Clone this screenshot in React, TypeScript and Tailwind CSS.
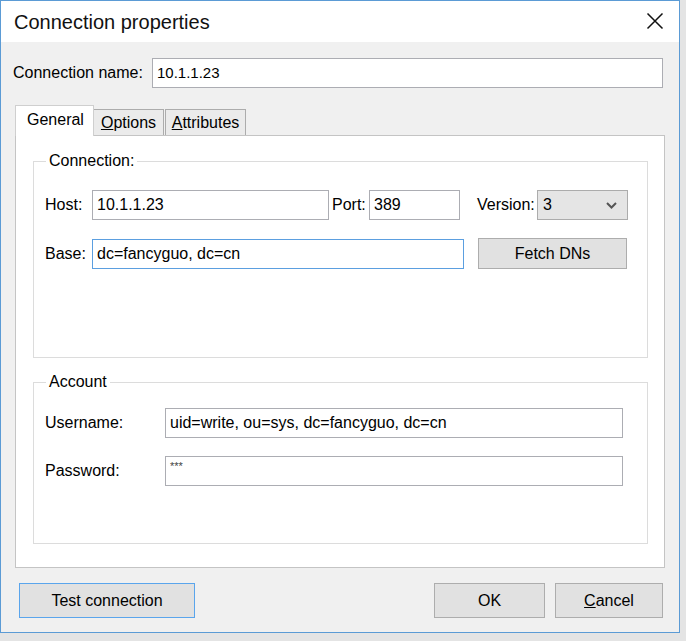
import React from 'react';

const FONT = "font-['Liberation_Sans',Arial,sans-serif]";

function TextBox({
  value,
  className = '',
  focused = false,
  tiny = false,
}: {
  value: string;
  className?: string;
  focused?: boolean;
  tiny?: boolean;
}) {
  return (
    <div
      className={`h-[30px] bg-white border flex pl-[4px] ${
        focused ? 'border-[#5b9fe0]' : 'border-[#acadb3]'
      } ${tiny ? 'items-start pt-[1px] text-[11px] text-[#444]' : 'items-center text-[16px]'} ${className}`}
    >
      {value}
    </div>
  );
}

function Button({
  children,
  className = '',
  focused = false,
}: {
  children: React.ReactNode;
  className?: string;
  focused?: boolean;
}) {
  return (
    <button
      className={`h-[35px] bg-[#e1e1e1] border text-[16px] flex items-center justify-center ${
        focused ? 'border-[#5aa5ec]' : 'border-[#adadad]'
      } ${className}`}
    >
      {children}
    </button>
  );
}

function GroupBox({
  title,
  className = '',
  children,
}: {
  title: string;
  className?: string;
  children: React.ReactNode;
}) {
  return (
    <div className={`relative border border-[#dcdcdc] ${className}`}>
      <span className="absolute -top-[11px] left-[12px] bg-white px-[3px] text-[16px] leading-[20px]">
        {title}
      </span>
      {children}
    </div>
  );
}

export default function App() {
  return (
    <div className={`w-[686px] h-[641px] bg-[#e4e4e4] text-black ${FONT}`}>
      <div className="w-[680px] h-[633px] border border-[#5b9bd5] bg-[#f0f0f0] flex flex-col">
        {/* Title bar */}
        <div className="h-[41px] bg-white flex items-center justify-between pl-[13px] pr-[15px]">
          <span className="text-[20px] text-[#111]">Connection properties</span>
          <svg width="18" height="18" viewBox="0 0 18 18" className="mb-[2px]">
            <path d="M1.5 1.5 L16.5 16.5 M16.5 1.5 L1.5 16.5" stroke="#111" strokeWidth="1.5" />
          </svg>
        </div>

        {/* Connection name */}
        <div className="mt-[16px] flex items-center pl-[12px] pr-[16px]">
          <span className="w-[139px] text-[16px]">Connection name:</span>
          <TextBox value="10.1.1.23" className="flex-1 !text-[15px]" />
        </div>

        {/* Tabs */}
        <div className="mt-[17px] ml-[14px] h-[30px] flex items-end text-[16px]">
          <div className="relative z-10 w-[79px] h-[31px] -mb-px bg-white border border-b-0 border-[#cfcfcf] flex items-center pl-[11px] pb-[2px]">
            General
          </div>
          <div className="w-[70px] h-[26px] bg-[#ebebeb] border border-l-0 border-b-0 border-[#acacac] flex items-center justify-center">
            <span>
              <span className="underline">O</span>ptions
            </span>
          </div>
          <div className="w-[81px] h-[26px] ml-[1px] bg-[#ebebeb] border border-b-0 border-[#acacac] flex items-center justify-center">
            <span>
              <span className="underline">A</span>ttributes
            </span>
          </div>
        </div>

        {/* Tab page */}
        <div className="ml-[14px] w-[650px] h-[433px] border border-[#c4c4c4] bg-white flex flex-col">
          <GroupBox title="Connection:" className="mt-[25px] ml-[17px] w-[615px] h-[197px] pt-[28px] pl-[11px]">
            <div className="flex items-center h-[30px] text-[16px]">
              <span className="w-[47px]">Host:</span>
              <TextBox value="10.1.1.23" className="w-[237px]" />
              <span className="ml-[3px] w-[37px]">Port:</span>
              <TextBox value="389" className="w-[91px]" />
              <span className="ml-[17px] w-[60px]">Version:</span>
              <div className="w-[91px] h-[30px] bg-[#e5e5e5] border border-[#acacac] flex items-center justify-between pl-[5px] pr-[10px]">
                <span>3</span>
                <svg width="11" height="7" viewBox="0 0 11 7">
                  <path d="M1 1 L5.5 5.5 L10 1" fill="none" stroke="#555" strokeWidth="2" />
                </svg>
              </div>
            </div>
            <div className="flex items-center h-[31px] mt-[18px] text-[16px]">
              <span className="w-[47px]">Base:</span>
              <TextBox value="dc=fancyguo, dc=cn" focused className="w-[372px]" />
              <Button className="ml-[14px] w-[149px] !h-[31px]">Fetch DNs</Button>
            </div>
          </GroupBox>

          <GroupBox title="Account" className="mt-[24px] ml-[17px] w-[615px] h-[162px] pt-[25px] pl-[11px]">
            <div className="flex items-center text-[16px]">
              <span className="w-[120px]">Username:</span>
              <TextBox value="uid=write, ou=sys, dc=fancyguo, dc=cn" className="w-[458px]" />
            </div>
            <div className="flex items-center mt-[18px] text-[16px]">
              <span className="w-[120px]">Password:</span>
              <TextBox value="***" tiny className="w-[458px]" />
            </div>
          </GroupBox>
        </div>

        {/* Footer */}
        <div className="mt-[15px] flex items-center pl-[18px] pr-[16px]">
          <Button focused className="w-[176px]">Test connection</Button>
          <div className="flex-1" />
          <Button className="w-[111px]">OK</Button>
          <Button className="ml-[10px] w-[108px]">
            <span>
              <span className="underline">C</span>ancel
            </span>
          </Button>
        </div>
      </div>
    </div>
  );
}
